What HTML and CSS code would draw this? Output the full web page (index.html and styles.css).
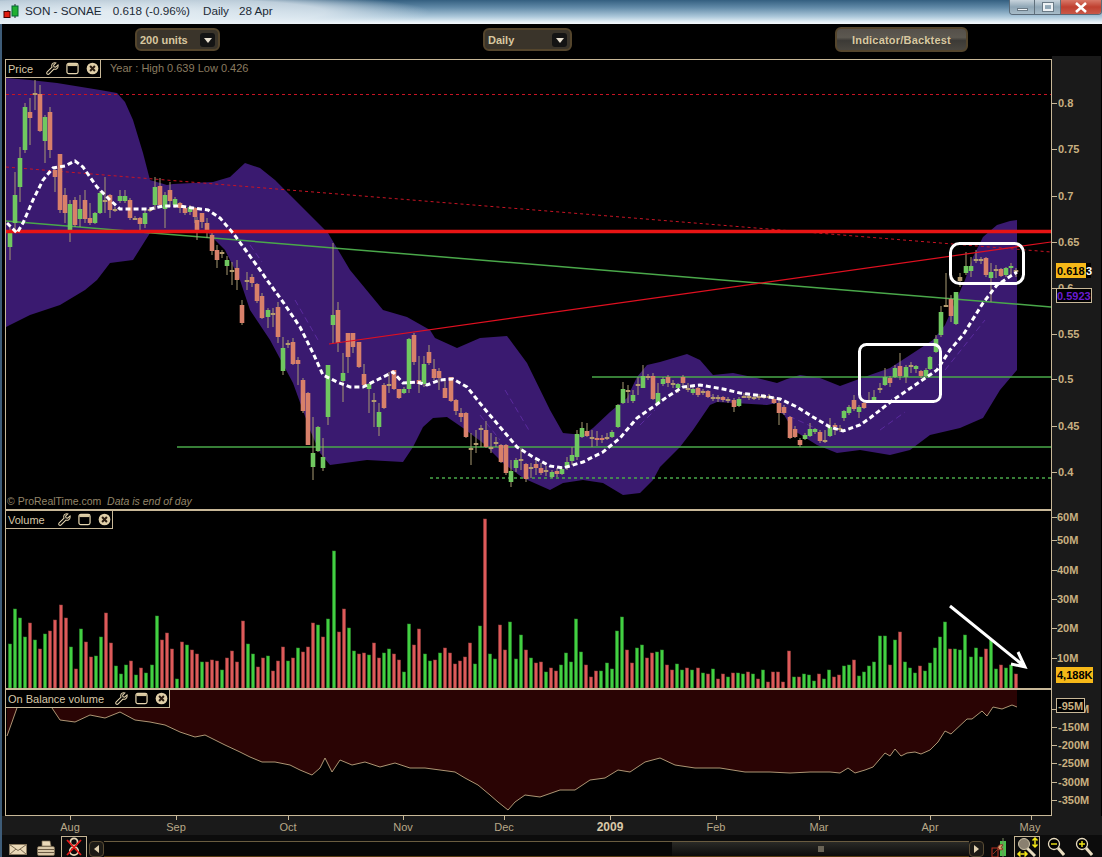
FILE: index.html
```html
<!DOCTYPE html>
<html lang="en">
<head>
<meta charset="utf-8">
<title>SON - SONAE</title>
<link rel="stylesheet" href="styles.css">
</head>
<body>
<svg class="defs" width="0" height="0" aria-hidden="true">
  <symbol id="i-wrench" viewBox="0 0 14 14"><path d="M13 3.2 10.4 5.6 8.6 5.2 8.2 3.4 10.6 1C8.6.3 6.4 1.400 6.200 3.500 6.100 4.300 6.300 5 6.500 5.500L1.300 10.700C.5 11.500.7 12.600 1.300 13 2 13.500 2.900 13.300 3.400 12.800L8.500 7.600C9.300 7.900 10.300 7.900 11.200 7.500 12.600 6.800 13.300 5 13 3.200Z" fill="none" stroke="#e6d6b0" stroke-width="1.100"/></symbol>
  <symbol id="i-win" viewBox="0 0 14 14"><rect x="1" y="1.500" width="12" height="11" rx="2" fill="#000" stroke="#e6d6b0" stroke-width="1.300"/><rect x="1.500" y="2" width="11" height="2.400" fill="#d8c8a0"/></symbol>
  <symbol id="i-close" viewBox="0 0 14 14"><circle cx="7" cy="7" r="6.300" fill="#e0cfa8"/><path d="M4.400 4.400 9.600 9.600M9.600 4.400 4.400 9.600" stroke="#2a1c10" stroke-width="2.200"/></symbol>
  <symbol id="i-lens" viewBox="0 0 18 20"><path d="M11 11 17 18" stroke="#e8dcc0" stroke-width="3"/><circle cx="7" cy="7" r="5.500" fill="#000" stroke="#e8dcc0" stroke-width="1.300"/></symbol>
</svg>

<header class="titlebar">
  <svg class="app-icon" width="16" height="15" viewBox="0 0 16 15">
    <path d="M5 6v8M12 0v14" stroke="#222"/>
    <rect x="1" y="7.500" width="6" height="6" fill="#e01c10" stroke="#400"/>
    <rect x="9" y="2" width="6" height="10" fill="#20b030" stroke="#063"/>
  </svg>
  <span class="t-name">SON - SONAE</span>
  <span class="t-price">0.618 (-0.96%)</span>
  <span class="t-period">Daily</span>
  <span class="t-date">28 Apr</span>
  <div class="winctl">
    <span class="wc wc-min"><i></i></span>
    <span class="wc wc-max"><i></i></span>
    <span class="wc wc-close">
      <svg width="14" height="11" viewBox="0 0 14 11"><path d="M2 1 12 10M12 1 2 10" stroke="#fff" stroke-width="2.600"/></svg>
    </span>
  </div>
</header>

<div class="main">
  <nav class="toolbar">
    <div class="tbtn tbtn-units"><b>200 units</b><span class="drop"></span></div>
    <div class="tbtn tbtn-daily"><b>Daily</b><span class="drop"></span></div>
    <div class="tbtn tbtn-ind"><b>Indicator/Backtest</b></div>
  </nav>

  <div class="charts">
    <section class="panel panel-price">
      <div class="plot">
        <svg class="plotsvg" viewBox="6 60 1045 449" width="1045" height="449">
          <polygon class="band" points="6,78 30,80 57,83 100,90 117,93 125,102 133,120 143,153 150,180 167,185 173,184 213,182 230,177 245,163 260,168 275,180 290,195 310,215 328,233 350,270 383,310 407,317 430,330 435,338 457,348 480,338 507,336 527,363 550,410 563,433 583,435 593,428 610,412 627,398 637,377 647,365 660,362 687,354 700,360 713,375 733,373 757,378 777,383 787,379 800,375 820,378 840,386 870,375 890,368 907,357 933,340 945,325 953,307 965,280 973,257 983,237 997,225 1010,221 1017,220 1017,370 1000,390 983,418 960,428 930,435 910,450 890,455 860,450 837,453 817,445 793,430 777,403 767,405 717,402 710,405 693,430 680,447 660,467 653,480 640,493 623,495 603,483 583,480 563,483 550,490 523,478 503,463 483,443 463,428 447,417 433,418 423,427 413,447 403,462 367,460 330,465 320,453 310,430 293,383 270,340 250,310 240,280 225,250 205,230 177,230 150,233 133,260 110,263 97,280 85,290 60,305 30,315 6,327"/>
          <g class="ma-faint">
            <path d="M250 245 262 262M295 300 318 340M480 415 500 440M505 390 530 432M640 425 655 410M700 390 720 400M780 412 815 428M880 430 905 412M945 370 985 320"/>
          </g>
          <path class="dash-red" d="M6 94.500H1051"/>
          <path class="dash-red" d="M6 167 1051 252"/>
          <path class="ln-green" d="M6 221 1051 307"/>
          <path class="ln-green" d="M592 377H1051"/>
          <path class="ln-green" d="M177 447H1051"/>
          <path class="dash-green" d="M430 478H1051"/>
          <g id="candles"></g>
          <path class="ln-red" d="M329 344 1051 242"/>
          <path class="ln-red-thick" d="M6 231.500H1051"/>
          <path class="ma" d="M7 223 17 233 23 223 33 200 43 180 53 168 65 166 75 161 83 167 97 187 110 200 120 209 133 209 150 209 163 206 180 206 193 208 208 210 220 218 233 233 247 252 260 270 267 280 283 302 300 327 313 353 323 375 337 382 350 387 363 387 377 380 393 372 403 383 417 382 427 385 440 380 453 379 467 387 483 407 500 427 517 447 533 457 550 466 563 468 583 462 603 452 620 438 637 418 653 407 667 397 683 387 700 385 723 389 740 393 763 396 780 399 797 407 813 417 830 427 843 431 860 425 870 418 893 400 937 370 950 350 963 335 983 303 997 285 1017 272"/>
          <rect class="hl" x="859.500" y="344.500" width="81" height="57" rx="7"/>
          <rect class="hl" x="950.500" y="243.500" width="73" height="40" rx="9"/>
          <text class="txt-muted" x="110" y="72">Year : High 0.639 Low 0.426</text>
          <text class="txt-foot" x="7" y="505">© ProRealTime.com <tspan class="ital">&#160;Data is end of day</tspan></text>
        </svg>
        <div class="plabel">
          <span>Price</span>
          <span class="lb-icons"><svg width="13" height="13"><use href="#i-wrench"/></svg><svg width="13" height="13"><use href="#i-win"/></svg><svg width="13" height="13"><use href="#i-close"/></svg></span>
        </div>
      </div>
      <svg class="axis" viewBox="1052 59 49 451" width="49" height="451">
        <path class="tick" d="M1052 103.500h5M1052 149.500h5M1052 196.500h5M1052 242.500h5M1052 288.500h5M1052 334.500h5M1052 379.500h5M1052 426.500h5M1052 472.500h5"/>
        <text x="1058" y="107">0.8</text><text x="1058" y="153">0.75</text><text x="1058" y="200">0.7</text>
        <text x="1058" y="246">0.65</text><text x="1058" y="292">0.6</text><text x="1058" y="338">0.55</text>
        <text x="1058" y="383">0.5</text><text x="1058" y="430">0.45</text><text x="1058" y="476">0.4</text>
        <rect class="tag-y" x="1056" y="263" width="30" height="15"/>
        <rect class="tag-k" x="1086" y="263" width="5" height="15"/>
        <text class="tag-txt" x="1057" y="274.500">0.618</text>
        <text class="tag-txt tag-w" x="1086" y="274.500">3</text>
        <rect class="tag-o" x="1056.500" y="288.500" width="35" height="14"/>
        <text class="tag-p" x="1057" y="299.500">0.5923</text>
      </svg>
    </section>

    <section class="panel panel-vol">
      <div class="plot">
        <svg class="plotsvg" viewBox="6 511 1045 177" width="1045" height="177">
          <g id="volume"></g>
          <path class="arrow" d="M950 606 1024 666M1018 652 1025 667 1011 664"/>
        </svg>
        <div class="plabel">
          <span>Volume</span>
          <span class="lb-icons"><svg width="13" height="13"><use href="#i-wrench"/></svg><svg width="13" height="13"><use href="#i-win"/></svg><svg width="13" height="13"><use href="#i-close"/></svg></span>
        </div>
      </div>
      <svg class="axis" viewBox="1052 510 49 179" width="49" height="179">
        <path class="tick" d="M1052 517.500h5M1052 540.500h5M1052 570.500h5M1052 599.500h5M1052 628.500h5M1052 658.500h5"/>
        <text x="1057" y="521">60M</text><text x="1057" y="544">50M</text><text x="1057" y="574">40M</text>
        <text x="1057" y="603">30M</text><text x="1057" y="632">20M</text><text x="1057" y="662">10M</text>
        <rect class="tag-y" x="1056" y="667" width="37" height="16"/>
        <text class="tag-txt" x="1057" y="679">4,188K</text>
      </svg>
    </section>

    <section class="panel panel-obv">
      <div class="plot">
        <svg class="plotsvg" viewBox="6 690 1045 125" width="1045" height="125">
          <polygon class="obv-fill" points="7,736 12,722 18,705 50,705 60,720 75,722 90,715 105,718 120,712 135,720 150,722 165,725 180,732 195,737 205,735 215,740 225,745 240,752 250,757 262,762 275,762 290,765 300,770 312,775 320,768 325,758 332,772 340,760 352,765 365,762 380,767 395,763 410,768 425,768 440,770 455,772 465,778 478,785 490,795 498,802 508,810 515,802 525,795 540,797 560,790 575,790 590,780 605,778 618,770 630,772 645,762 660,758 675,765 695,768 720,768 745,772 770,772 790,773 810,772 830,772 840,773 848,768 855,773 865,770 873,767 885,753 890,756 895,749 901,756 907,753 915,752 921,754 930,750 938,742 945,731 951,734 967,719 972,719 982,711 987,716 993,707 1002,709 1012,705 1017,707 1017,690 7,690"/>
          <polyline class="obv-line" points="7,736 12,722 18,705 50,705 60,720 75,722 90,715 105,718 120,712 135,720 150,722 165,725 180,732 195,737 205,735 215,740 225,745 240,752 250,757 262,762 275,762 290,765 300,770 312,775 320,768 325,758 332,772 340,760 352,765 365,762 380,767 395,763 410,768 425,768 440,770 455,772 465,778 478,785 490,795 498,802 508,810 515,802 525,795 540,797 560,790 575,790 590,780 605,778 618,770 630,772 645,762 660,758 675,765 695,768 720,768 745,772 770,772 790,773 810,772 830,772 840,773 848,768 855,773 865,770 873,767 885,753 890,756 895,749 901,756 907,753 915,752 921,754 930,750 938,742 945,731 951,734 967,719 972,719 982,711 987,716 993,707 1002,709 1012,705 1017,707"/>
        </svg>
        <div class="plabel">
          <span>On Balance volume</span>
          <span class="lb-icons"><svg width="13" height="13"><use href="#i-wrench"/></svg><svg width="13" height="13"><use href="#i-win"/></svg><svg width="13" height="13"><use href="#i-close"/></svg></span>
        </div>
      </div>
      <svg class="axis" viewBox="1052 689 49 127" width="49" height="127">
        <path class="tick" d="M1052 727.500h5M1052 745.500h5M1052 763.500h5M1052 782.500h5M1052 800.500h5M1052 709.500h5"/>
        <text x="1058" y="713">-100M</text>
        <text x="1058" y="731">-150M</text><text x="1058" y="749">-200M</text><text x="1058" y="767">-250M</text>
        <text x="1058" y="786">-300M</text><text x="1058" y="804">-350M</text>
        <rect class="tag-bk" x="1056.500" y="698.500" width="28" height="14"/>
        <text x="1058" y="709.500">-95M</text>
      </svg>
    </section>
  </div>

  <svg class="timeaxis" viewBox="2 816 1100 19" width="1100" height="19">
    <path class="tick" d="M70.500 816v4M176.500 816v4M288.500 816v4M403.500 816v4M504.500 816v4M610.500 816v4M716.500 816v4M819.500 816v4M930.500 816v4M1031.500 816v4"/>
    <text x="70" y="831">Aug</text><text x="176" y="831">Sep</text><text x="288" y="831">Oct</text>
    <text x="403" y="831">Nov</text><text x="504" y="831">Dec</text><text class="yr" x="610" y="831">2009</text>
    <text x="716" y="831">Feb</text><text x="819" y="831">Mar</text><text x="930" y="831">Apr</text><text x="1030" y="831">May</text>
  </svg>

  <footer class="bottombar">
    <svg class="b-mail" width="18" height="11" viewBox="0 0 18 11"><rect x=".5" y=".5" width="17" height="10" fill="#ead9b8" stroke="#8a7a60"/><path d="M.5.5 9 6.500 17.500.5M.5 10.500 7 5M17.500 10.500 11 5" fill="none" stroke="#7a6a50"/></svg>
    <svg class="b-print" width="18" height="17" viewBox="0 0 18 17"><path d="M5 1h8l1 5H5z" fill="#ead9b8" stroke="#7a6a50" stroke-width=".7"/><rect x=".5" y="6.500" width="17" height="9" rx="1.500" fill="#d9c8a8" stroke="#7a6a50" stroke-width=".7"/><path d="M1 9.500h16M1 12.500h16" stroke="#6a5a44"/></svg>
    <div class="b-sel b-sel-x">
      <svg width="24" height="20" viewBox="0 0 24 20"><circle cx="12" cy="5" r="3.600" fill="none" stroke="#e8d8b8" stroke-width="1.800"/><circle cx="12" cy="14" r="4.200" fill="none" stroke="#e8d8b8" stroke-width="1.800"/><path d="M5 3 19 18M19 3 5 18" stroke="#e81818" stroke-width="1.800"/></svg>
    </div>
    <div class="scroll">
      <span class="sbtn"><i class="tri-l"></i></span>
      <div class="strack"><div class="sthumb"><i></i></div></div>
      <span class="sbtn"><i class="tri-r"></i></span>
    </div>
    <svg class="b-tool" width="16" height="19" viewBox="0 0 16 19"><rect x="9" y="3" width="6" height="15" fill="#4ac04a"/><path d="M12 0v19" stroke="#7a8a60"/><rect x="1" y="10" width="6" height="9" fill="none" stroke="#c03020"/><path d="M2 16 8 10M7 11C6 7 10 6 12 7L10 9.500 12 11C10 12.500 8 12 7 11Z" fill="#d8a070" stroke="#8a3020"/></svg>
    <div class="b-sel b-sel-z">
      <svg width="24" height="20" viewBox="0 0 24 20"><path d="M12 11 20 19" stroke="#e8dcc0" stroke-width="3"/><circle cx="9" cy="7" r="5.500" fill="#8a8070" stroke="#cfc4a8"/><path d="M20 1v9M17.500 3.500 20 1l2.500 2.500M17.500 7.500 20 10l2.500-2.500M3 17h9M5.500 14.500 3 17l2.500 2.500M9.500 14.500 12 17l-2.500 2.500" fill="none" stroke="#f4e818" stroke-width="1.500"/></svg>
    </div>
    <svg class="b-minus" width="18" height="20" viewBox="0 0 18 20"><use href="#i-lens"/><path d="M4 7h6" stroke="#f4e818" stroke-width="1.400"/></svg>
    <svg class="b-plus" width="18" height="20" viewBox="0 0 18 20"><use href="#i-lens"/><path d="M4 7h6M7 4v6" stroke="#f4e818" stroke-width="1.400"/></svg>
  </footer>
</div>
<script src="chart.js"></script>
</body>
</html>
```

FILE: styles.css
```css
html, body { margin: 0; padding: 0; background: #000; }
body {
  width: 1102px;
  height: 857px;
  overflow: hidden;
  font-family: "Liberation Sans", Arial, sans-serif;
  color: #c8b48c;
}
.defs { position: absolute; }

/* title bar */
.titlebar {
  height: 24px;
  box-sizing: border-box;
  display: flex;
  align-items: flex-start;
  padding: 3px 0 0 3px;
  background:
    radial-gradient(ellipse 300px 22px at 130px 12px, rgba(238,244,248,.9) 0, rgba(230,238,244,.75) 65%, rgba(230,238,244,0) 100%),
    linear-gradient(180deg, #345f80 0, #5f88a6 30%, #adc9db 70%, #e6f0f6 92%, #f4f8fb 100%);
  color: #1c2a36;
  font-size: 11.700px;
  line-height: 16px;
}
.app-icon { margin-top: 1px; }
.t-name { margin-left: 6px; }
.t-price { margin-left: 11px; }
.t-period { margin-left: 13px; }
.t-date { margin-left: 10px; }
.winctl {
  margin-left: auto;
  margin-top: -3px;
  display: flex;
  height: 15px;
  border: 1px solid #5a6a78;
  border-top: 0;
  border-radius: 0 0 4px 4px;
  overflow: hidden;
  box-sizing: border-box;
  width: 93px;
}
.wc { display: flex; align-items: center; justify-content: center; width: 25px; background: linear-gradient(180deg, #c8d4dc, #8fa6b6 50%, #a8bcc8); border-right: 1px solid #60707c; }
.wc-min i { width: 11px; height: 3px; margin-top: 5px; background: #eef2f5; border: 1px solid #6a7a86; box-sizing: border-box; }
.wc-max i { width: 10px; height: 8px; border: 2px solid #eef2f5; box-sizing: border-box; outline: 1px solid #6a7a86; }
.wc-close { width: 41px; background: linear-gradient(180deg, #d87868, #c04030 50%, #c85848); border-right: 0; }

/* main */
.main { border-left: 2px solid #3e5c78; }
.toolbar {
  height: 32px;
  box-sizing: border-box;
  display: flex;
  gap: 263px;
  padding: 4px 0 0 133px;
  background: #000;
}
.tbtn {
  height: 23px;
  box-sizing: border-box;
  display: flex;
  align-items: center;
  border: 2px solid #54452c;
  border-radius: 6px;
  background: #3a342a;
  color: #d8c8a0;
  font-size: 11px;
  padding: 0 3px 0 3px;
}
.tbtn b { flex: 1; font-weight: bold; }
.tbtn-units { width: 85px; }
.tbtn-daily { width: 89px; }
.tbtn-ind {
  width: 133px;
  height: 25px;
  margin-top: -1px;
  justify-content: center;
  background: linear-gradient(180deg, #55504a 0, #5c5850 40%, #3c3a36 55%, #4a463f 100%);
  text-align: center;
  letter-spacing: .2px;
}
.drop {
  width: 15px;
  height: 14px;
  border-radius: 3px;
  background: #141414;
  position: relative;
}
.drop::after {
  content: "";
  position: absolute;
  left: 3.500px;
  top: 5px;
  border: 4px solid transparent;
  border-top: 5px solid #e8e0d0;
  border-bottom: 0;
}

.charts {
  padding: 3px 0 0 3px;
  background: linear-gradient(90deg, #000 1050px, #1a1a1a 1050px, #1a1a1a 1099px, #000 1099px);
}
.panel { display: flex; }
.plot {
  width: 1047px;
  box-sizing: border-box;
  border: 1px solid #c8b898;
  background: #000;
  position: relative;
  flex: none;
}
.panel-price .plot { height: 451px; }
.panel-vol .plot { height: 179px; }
.panel-obv .plot { height: 127px; }
.plotsvg, .axis, .timeaxis { display: block; }
.plabel {
  position: absolute;
  left: 0;
  top: 0;
  height: 18px;
  box-sizing: border-box;
  display: flex;
  align-items: center;
  padding: 0 1px 0 2px;
  background: #000;
  border-right: 1px solid #c8b898;
  border-bottom: 1px solid #c8b898;
  color: #d8c8a8;
  font-size: 11px;
  white-space: nowrap;
}
.lb-icons { display: flex; gap: 7px; margin-left: auto; }
.panel-price .plabel { width: 95px; }
.panel-vol .plabel { width: 107px; }
.panel-obv .plabel { width: 164px; }
.lb-icons svg { display: block; }

.band { fill: #3a1a70; }
.ma-faint path { fill: none; stroke: #5a2a9e; stroke-width: 1; stroke-dasharray: 6 4; }
.dash-red { fill: none; stroke: #c81424; stroke-width: 1; stroke-dasharray: 3 3; }
.ln-green { fill: none; stroke: #4aa84a; stroke-width: 1.500; }
.dash-green { fill: none; stroke: #4aa84a; stroke-width: 1.500; stroke-dasharray: 3 3; }
.ln-red { fill: none; stroke: #e01020; stroke-width: 1.200; }
.ln-red-thick { fill: none; stroke: #e81414; stroke-width: 3.500; }
.ma { fill: none; stroke: #fff; stroke-width: 3; stroke-dasharray: 5 3; }
.hl { fill: none; stroke: #fff; stroke-width: 3; }
.arrow { fill: none; stroke: #fff; stroke-width: 3; }
.txt-muted { fill: #8a7c60; font-size: 11px; }
.txt-foot { fill: #94866a; font-size: 10.500px; }
.ital { font-style: italic; }

.wick { fill: #a89a72; }
.c-g { fill: #70c860; }
.c-r { fill: #d8806a; }
.c-d { fill: #b59c6f; }
.v-g { fill: #42d042; stroke: #2e8f2e; stroke-width: .5; }
.v-r { fill: #de5a5a; stroke: #98403e; stroke-width: .5; }

.obv-fill { fill: #2a0404; }
.obv-line { fill: none; stroke: #bda680; stroke-width: .9; }

.axis text {
  fill: #c8b080;
  font-size: 11px;
  font-weight: bold;
}
.tick { fill: none; stroke: #c8b898; stroke-width: 1; }
.tag-y { fill: #f6b818; }
.tag-k { fill: #000; }
.tag-o { fill: #000; stroke: #c8b898; stroke-width: 1; }
.tag-bk { fill: #000; stroke: #c8b898; stroke-width: 1; }
.axis .tag-txt { fill: #000; }
.axis .tag-w { fill: #fff; }
.axis .tag-p { fill: #6a1cd0; }

.timeaxis { background: #1a1a1a; }
.timeaxis text {
  fill: #b8a888;
  font-size: 11px;
  text-anchor: middle;
}
.timeaxis .yr { font-weight: bold; fill: #d8c8a8; font-size: 12px; }

/* bottom toolbar */
.bottombar {
  height: 22px;
  display: flex;
  align-items: flex-end;
  background: #0c0c0c;
  padding-left: 7px;
}
.b-mail { margin: 0 0 2px 0; }
.b-print { margin: 0 0 0 10px; }
.b-sel {
  box-sizing: border-box;
  height: 21px;
  width: 26px;
  border: 1px solid #c4b494;
  border-bottom: 0;
  display: flex;
  justify-content: center;
}
.b-sel-x { margin-left: 6px; }
.scroll { display: flex; margin-left: 2px; height: 16px; }
.sbtn {
  width: 15px;
  box-sizing: border-box;
  border: 1px solid #5a4c34;
  border-radius: 4px;
  background: #1c1a16;
  display: flex;
  align-items: center;
  justify-content: center;
}
.tri-l { border: 4px solid transparent; border-right: 5px solid #e0d0b0; border-left: 0; }
.tri-r { border: 4px solid transparent; border-left: 5px solid #e0d0b0; border-right: 0; }
.strack {
  width: 865px;
  box-sizing: border-box;
  border-top: 1px solid #6a5c40;
  border-bottom: 1px solid #5a3c10;
  background: #070707;
  display: flex;
  justify-content: flex-end;
}
.sthumb {
  width: 297px;
  box-sizing: border-box;
  background: linear-gradient(180deg, #2a2a26, #0c0c0c);
  display: flex;
  align-items: center;
  justify-content: center;
}
.sthumb i { width: 6px; height: 6px; background: #6a6456; }
.b-tool { margin: 0 0 0 7px; }
.b-sel-z { margin-left: 7px; }
.b-minus { margin: 0 0 0 7px; }
.b-plus { margin: 0 0 0 10px; }
```

FILE: chart.js
```js
// x, high, bodyTop, bodyBottom, low, colour (g/r/d)
var candles = [
[10,225,232,247,260,'g'],[15,172,195,223,233,'g'],[20,147,158,187,202,'g'],[25,103,107,150,153,'g'],[30,98,112,118,145,'r'],
[35,80,93,94,110,'d'],[40,85,94,131,132,'r'],[45,115,117,141,163,'g'],[50,107,112,150,158,'r'],[55,167,170,177,192,'r'],
[60,154,154,210,213,'r'],[65,188,195,213,223,'r'],[70,200,204,230,242,'g'],[75,197,200,225,227,'r'],[80,195,209,219,227,'g'],
[85,190,200,219,223,'r'],[90,203,218,223,225,'r'],[95,212,213,223,224,'g'],[100,191,193,213,214,'g'],[105,177,200,201,213,'d'],
[110,194,195,210,218,'r'],[115,207,209,210,212,'d'],[120,190,196,201,203,'g'],[125,190,196,201,203,'g'],[130,198,200,218,220,'r'],
[135,216,218,219,220,'d'],[140,217,218,224,230,'r'],[145,210,213,224,228,'g'],[150,207,209,210,212,'d'],[155,177,187,205,210,'g'],
[160,178,186,205,207,'r'],[165,192,195,209,228,'g'],[170,182,190,201,207,'r'],[175,197,199,205,208,'g'],[180,202,203,208,213,'r'],
[185,207,208,213,215,'r'],[190,205,207,212,215,'g'],[195,207,208,217,223,'r'],[197,217,220,230,240,'r'],[202,213,213,222,228,'r'],
[207,218,223,233,238,'r'],[212,232,235,251,255,'r'],[217,245,250,260,268,'r'],[222,250,252,253,258,'d'],[227,256,260,266,275,'g'],
[232,262,270,271,285,'d'],[237,260,268,280,290,'r'],[242,300,305,323,325,'r'],[247,272,280,281,290,'d'],[252,274,277,283,287,'r'],
[257,283,284,301,303,'r'],[262,293,296,318,319,'r'],[268,308,310,317,328,'g'],[273,308,313,314,327,'d'],[278,302,307,337,343,'r'],
[283,337,348,371,375,'g'],[288,340,343,344,348,'d'],[293,338,342,364,365,'r'],[298,357,360,364,385,'r'],[303,378,380,411,413,'r'],
[308,392,393,445,445,'r'],[313,417,453,467,480,'g'],[318,426,427,451,452,'g'],[323,438,457,468,471,'g'],[328,365,365,417,425,'g'],
[333,243,315,325,343,'g'],[338,302,310,343,352,'r'],[343,353,373,381,402,'g'],[348,333,333,357,373,'r'],[353,333,333,347,353,'r'],
[359,342,342,367,368,'r'],[364,364,374,385,387,'r'],[369,383,384,389,413,'g'],[374,393,400,402,427,'d'],[379,403,412,427,436,'g'],
[384,383,385,408,409,'r'],[389,372,384,385,393,'d'],[394,370,370,389,390,'r'],[399,389,389,398,399,'r'],[404,387,389,393,394,'g'],
[409,338,339,389,393,'g'],[414,333,335,362,365,'r'],[419,356,380,384,393,'r'],[424,356,364,384,387,'g'],[429,345,352,363,365,'r'],
[434,359,369,378,380,'r'],[439,368,371,378,390,'r'],[445,378,388,398,398,'r'],[451,377,377,401,402,'r'],[456,399,400,411,415,'r'],
[461,408,413,417,422,'r'],[466,412,413,437,438,'r'],[471,433,448,449,465,'d'],[476,430,443,444,453,'d'],[481,425,428,429,447,'d'],
[486,421,430,447,448,'r'],[491,433,447,448,453,'d'],[496,437,442,443,447,'d'],[501,444,445,462,463,'r'],[506,444,445,473,475,'r'],
[511,460,471,482,487,'g'],[516,458,460,468,472,'g'],[521,448,459,460,470,'d'],[526,463,464,479,482,'r'],[531,463,467,468,478,'d'],
[536,460,464,468,475,'r'],[541,463,468,473,475,'r'],[546,466,470,471,476,'d'],[552,470,472,477,478,'g'],[557,468,471,474,477,'r'],
[562,467,469,474,475,'g'],[567,457,462,468,470,'g'],[572,447,455,461,465,'g'],[577,430,434,457,460,'g'],[582,422,428,437,438,'g'],
[587,423,431,436,437,'r'],[592,430,437,438,447,'d'],[597,431,438,439,446,'r'],[602,435,438,440,443,'r'],[607,433,437,438,440,'d'],
[612,430,432,437,438,'g'],[618,404,405,427,428,'g'],[623,382,389,403,404,'g'],[628,385,390,391,403,'d'],[633,390,395,401,403,'g'],
[638,377,384,385,395,'d'],[643,365,376,388,388,'g'],[648,374,376,377,380,'d'],[653,373,376,399,400,'r'],[658,383,393,403,405,'g'],
[663,377,379,384,386,'g'],[668,375,377,383,387,'r'],[673,380,383,384,388,'d'],[678,383,384,388,393,'g'],[683,375,377,383,385,'r'],
[688,383,388,389,392,'d'],[693,387,389,393,395,'g'],[698,387,388,395,397,'r'],[703,389,391,392,395,'d'],[708,390,391,397,398,'r'],
[713,394,397,398,401,'d'],[718,395,397,398,402,'d'],[723,396,397,400,402,'r'],[728,397,399,400,403,'d'],[734,398,400,407,412,'r'],
[739,397,399,406,407,'g'],[744,393,396,397,398,'d'],[749,394,396,397,400,'d'],[754,394,397,398,400,'d'],[759,394,396,397,400,'d'],
[764,394,396,397,399,'d'],[769,394,396,397,399,'d'],[774,397,399,403,404,'r'],[779,400,403,413,425,'r'],[784,405,407,413,415,'r'],
[790,416,417,438,439,'r'],[795,426,429,437,438,'r'],[800,438,440,445,447,'r'],[805,433,435,439,440,'g'],[810,423,429,436,437,'g'],
[815,428,429,432,434,'g'],[820,430,432,441,443,'r'],[825,430,440,441,443,'d'],[830,418,427,436,437,'g'],[835,423,425,427,435,'r'],
[840,425,428,429,432,'d'],[844,410,411,418,421,'g'],[849,405,407,413,415,'g'],[854,395,400,409,411,'r'],[859,405,407,412,418,'g'],
[864,400,403,408,409,'r'],[869,392,400,401,402,'d'],[874,390,397,400,402,'g'],[880,383,388,389,393,'d'],[885,368,377,385,386,'g'],
[890,376,378,383,387,'r'],[895,365,368,377,378,'g'],[900,353,366,376,380,'r'],[906,365,367,377,383,'g'],[911,362,365,366,373,'d'],
[916,365,366,369,373,'g'],[921,370,371,376,378,'r'],[926,368,370,376,377,'g'],[930,356,357,369,370,'g'],[936,335,339,352,353,'g'],
[941,306,312,335,337,'g'],[946,273,305,306,307,'d'],[951,295,299,316,322,'r'],[956,292,292,324,325,'g'],[960,273,277,281,287,'d'],
[966,252,266,273,275,'g'],[971,257,266,271,277,'g'],[976,250,259,260,263,'d'],[981,257,259,260,264,'d'],[986,257,258,275,277,'r'],
[991,263,272,278,302,'g'],[996,265,269,270,278,'d'],[1001,268,269,276,277,'r'],[1006,267,268,275,277,'g'],[1011,263,266,268,277,'g'],
[1016,268,270,271,277,'d']
];

// top of each volume bar, with its colour
var vol = [
'644g','609g','618g','637g','623r','640g','649r','634g','631r','620r','605r','618r','647g','669r','629g','642r','657r','656g','637g','613r',
'643r','666g','674g','665g','661r','675g','668r','673g','665g','616g','640r','633r','649r','679g','642r','645g','650r','654r','662g','662r',
'660r','661r','670g','658r','651r','662r','621r','644g','654g','667r','658r','656g','671r','661r','647r','661g',
'658r','648g','652r','647r','623r','625g','637r','619g','551g','632r','609r','628g','651g','654r','653r','655g','643r','658r','653g','649g',
'654r','660r','672g','624g','645r','629r','654g','661g','660r','653g','648r','653r','664r','661r','657r','643r','664g','626g','519r','654g',
'659g','625r','650r','622g','659g','635g','650r','658g','663r','662r','672g','668r','671r','665g','653g',
'662g','619g','652g','665r','677r','671r','671g','663g','669g','631g','617g','650r','663r','648g','645g','658r','653r','652g','650g','665r',
'670r','664g','670g','668r','670g','668r','673g','674r','669g','679r','674r','677g','673r','673g','674g','672r','674g','679r','670g','682r',
'672r','672r','682r','651r','677g','677r','674g','675g','681g','674r','679g','670g','677r','675r','666g','665g',
'660r','676g','672g','666g','662g','636g','636g','665r','640g','632r','662g','668g','673g','666r','671g','663g','648g','637g','622g','649r',
'649g','650g','635g','657g','648g','657g','649r','640g','669g','665r','668g','665g','674r'
];

var NS = 'http://www.w3.org/2000/svg';
function rect(parent, cls, x, y, w, h) {
  var r = document.createElementNS(NS, 'rect');
  r.setAttribute('class', cls);
  r.setAttribute('x', x);
  r.setAttribute('y', y);
  r.setAttribute('width', w);
  r.setAttribute('height', h);
  parent.appendChild(r);
}

var cg = document.getElementById('candles');
candles.forEach(function (c) {
  rect(cg, 'wick', c[0] - 0.5, c[1], 1, c[4] - c[1]);
  rect(cg, 'c-' + c[5], c[0] - 2.3, c[2], 4.6, Math.max(c[3] - c[2], 2));
});

var vg = document.getElementById('volume');
var step = (1016 - 10) / (vol.length - 1);
vol.forEach(function (v, i) {
  var top = parseInt(v, 10);
  rect(vg, 'v-' + v.slice(-1), Math.round(10 + i * step) - 1.5, top, 3, 688 - top);
});
```
